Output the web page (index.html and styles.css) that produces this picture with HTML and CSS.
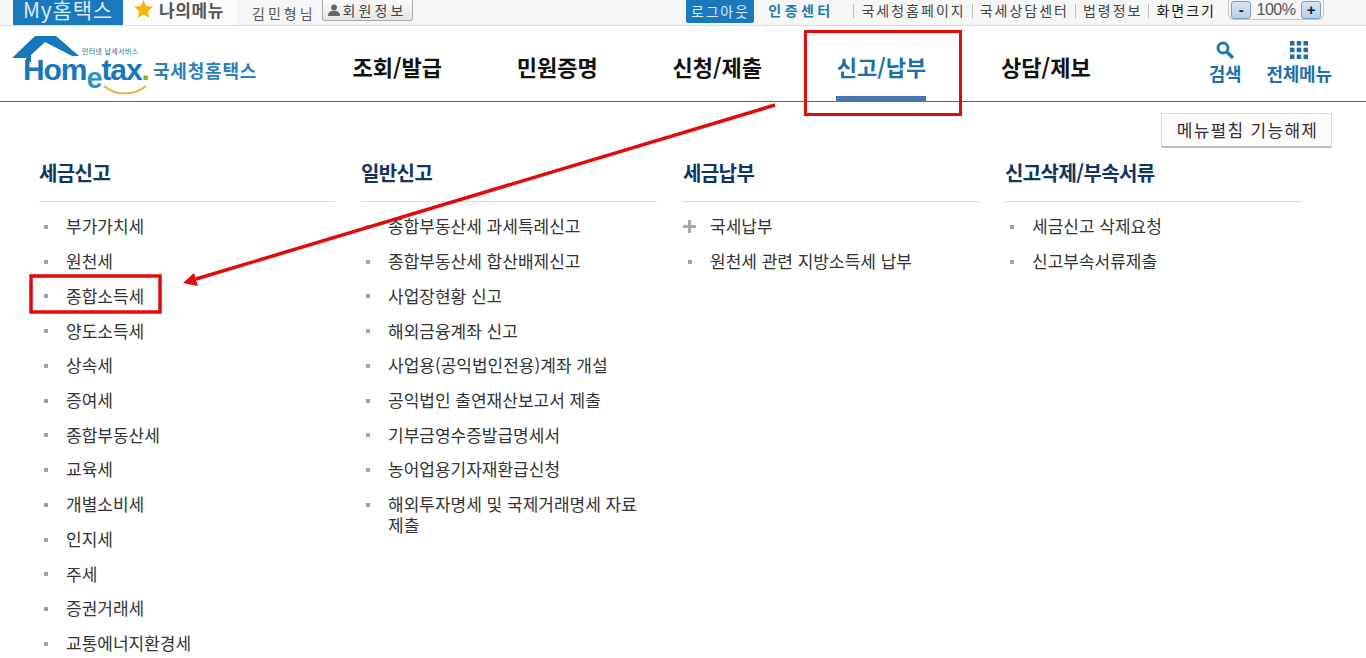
FILE: index.html
```html
<!DOCTYPE html>
<html lang="ko">
  <head>
    <meta charset="UTF-8" />
    <title>국세청 홈택스</title>
    <link rel="stylesheet" href="styles.css">
  </head>
  <body>
    <!-- 상단 유틸 바 -->
    <div class="topbar">
      <div class="topbar-left">
        <a class="my-tab">My홈택스</a>
        <a class="fav-tab">
          <svg class="star" viewBox="0 0 20 20" width="19" height="19"><path d="M10 0l2.900 6.300 6.900.8-5.100 4.700 1.400 6.800L10 15.200 3.900 18.600l1.400-6.800L.2 7.100l6.900-.8z" fill="#f7b512"/></svg>
          나의메뉴
        </a>
        <span class="user-name">김민형님</span>
        <a class="user-btn">
          <svg viewBox="0 0 14 14" width="14" height="14"><circle cx="7" cy="4" r="3.300" fill="#666"/><path d="M0 14c0-4 2.500-6 7-6s7 2 7 6z" fill="#666"/></svg>
          회원정보
        </a>
      </div>
      <div class="topbar-right">
        <a class="logout">로그아웃</a>
        <a class="cert">인증센터</a>
        <a class="util">국세청홈페이지</a>
        <a class="util">국세상담센터</a>
        <a class="util">법령정보</a>
        <a class="util dark">화면크기</a>
        <div class="zoom-box">
          <span class="zoom-btn">-</span>
          <span class="zoom-val">100%</span>
          <span class="zoom-btn">+</span>
        </div>
      </div>
    </div>

    <!-- 헤더 -->
    <div class="header">
      <a class="logo">
        <svg class="logo-house" viewBox="0 0 72 26" width="72" height="26">
          <path d="M0 22L23 0h21l23 20h-7L33 6 19 19v13h-5V22z" fill="#1777bb"/>
        </svg>
        <span class="logo-sub">인터넷 납세서비스</span>
        <span class="logo-word">Hom<span class="logo-e">e</span>tax<span class="logo-dot">.</span></span>
        <svg class="logo-smile" viewBox="0 0 44 10" width="44" height="10"><path d="M1 1c12 10 30 10 42 0" fill="none" stroke="#f0b040" stroke-width="2"/></svg>
        <span class="logo-name">국세청홈택스</span>
      </a>
      <div class="nav">
        <a class="nav-item">조회/발급</a>
        <a class="nav-item">민원증명</a>
        <a class="nav-item">신청/제출</a>
        <a class="nav-item active">신고/납부</a>
        <a class="nav-item">상담/제보</a>
      </div>
      <div class="header-tools">
        <a class="tool search">
          <svg viewBox="0 0 18 18" width="18" height="18"><circle cx="7" cy="7" r="5" fill="none" stroke="#1f79b8" stroke-width="3"/><path d="M11 11l6 6" stroke="#1f79b8" stroke-width="3.400"/></svg>
          검색
        </a>
        <a class="tool all">
          <svg viewBox="0 0 18 18" width="18" height="18" fill="#1f6fa8"><rect width="4.500" height="4.500"/><rect x="6.700" width="4.500" height="4.500"/><rect x="13.500" width="4.500" height="4.500"/><rect y="6.700" width="4.500" height="4.500"/><rect x="6.700" y="6.700" width="4.500" height="4.500"/><rect x="13.500" y="6.700" width="4.500" height="4.500"/><rect y="13.500" width="4.500" height="4.500"/><rect x="6.700" y="13.500" width="4.500" height="4.500"/><rect x="13.500" y="13.500" width="4.500" height="4.500"/></svg>
          전체메뉴
        </a>
      </div>
    </div>

    <!-- 메뉴 펼침 영역 -->
    <div class="menu-area">
      <div class="menu-toolbar">
        <button class="unfold-btn">메뉴펼침 기능해제</button>
      </div>
      <div class="columns">
        <div class="col">
          <h3>세금신고</h3>
          <ul>
            <li>부가가치세</li>
            <li>원천세</li>
            <li>종합소득세</li>
            <li>양도소득세</li>
            <li>상속세</li>
            <li>증여세</li>
            <li>종합부동산세</li>
            <li>교육세</li>
            <li>개별소비세</li>
            <li>인지세</li>
            <li>주세</li>
            <li>증권거래세</li>
            <li>교통에너지환경세</li>
          </ul>
        </div>
        <div class="col">
          <h3>일반신고</h3>
          <ul>
            <li>종합부동산세 과세특례신고</li>
            <li>종합부동산세 합산배제신고</li>
            <li>사업장현황 신고</li>
            <li>해외금융계좌 신고</li>
            <li>사업용(공익법인전용)계좌 개설</li>
            <li>공익법인 출연재산보고서 제출</li>
            <li>기부금영수증발급명세서</li>
            <li>농어업용기자재환급신청</li>
            <li>해외투자명세 및 국제거래명세 자료 제출</li>
          </ul>
        </div>
        <div class="col">
          <h3>세금납부</h3>
          <ul>
            <li class="plus">국세납부</li>
            <li>원천세 관련 지방소득세 납부</li>
          </ul>
        </div>
        <div class="col">
          <h3>신고삭제/부속서류</h3>
          <ul>
            <li>세금신고 삭제요청</li>
            <li>신고부속서류제출</li>
          </ul>
        </div>
      </div>
    </div>

    <!-- 빨간 표시 -->
    <svg class="marks" width="1366" height="658" viewBox="0 0 1366 658">
      <rect x="805.500" y="31.500" width="155" height="83" fill="none" stroke="#e30a0a" stroke-width="3"/>
      <rect x="31" y="276" width="129" height="36" fill="none" stroke="#e30a0a" stroke-width="3.500"/>
      <path d="M775 105L196 279" stroke="#e30a0a" stroke-width="3.500"/>
      <path d="M183 283L194 273L198 286z" fill="#e30a0a"/>
    </svg>
  </body>
</html>
```

FILE: styles.css
```css
html,
body {
  margin: 0;
  padding: 0;
  height: 658px;
  overflow: hidden;
}
body {
  position: relative;
  background: #fff;
  color: #333;
  font-family: "Noto Sans CJK KR", "Liberation Sans", sans-serif;
}
a {
  display: inline-block;
  text-decoration: none;
}

/* top bar */
.topbar {
  display: flex;
  justify-content: space-between;
  height: 25px;
  padding-left: 13px;
  padding-right: 42px;
  background: #f6f6f6;
  border-bottom: 1px solid #dcdcdc;
}
.topbar-left,
.topbar-right {
  display: flex;
  align-items: flex-start;
}
.my-tab {
  width: 110px;
  height: 25px;
  background: #1a78bd;
  color: #d8ecf8;
  font-size: 21px;
  letter-spacing: 0.800px;
  line-height: 19px;
  text-align: center;
}
.fav-tab {
  display: flex;
  align-items: flex-start;
  gap: 6px;
  box-sizing: border-box;
  width: 114px;
  height: 25px;
  padding-left: 11px;
  background: #fcfcfc;
  color: #555;
  font-size: 17px;
  font-weight: 700;
  letter-spacing: 0.600px;
  line-height: 20px;
}
.star {
  flex: none;
}
.user-name {
  margin-left: 15px;
  margin-top: 3px;
  color: #555;
  font-size: 14px;
  letter-spacing: 3px;
  line-height: 20px;
}
.user-btn {
  display: flex;
  align-items: center;
  gap: 3px;
  box-sizing: border-box;
  width: 91px;
  height: 21px;
  margin-left: 6px;
  padding: 0 5px;
  background: linear-gradient(#fafafa, #e6e6e6);
  border: 1px solid #aaa;
  border-top: 0;
  border-radius: 0 0 3px 3px;
  color: #444;
  font-size: 14px;
  letter-spacing: 3.100px;
  white-space: nowrap;
}
.logout {
  width: 68px;
  height: 23px;
  background: #1a78bd;
  border-radius: 0 0 2px 2px;
  color: #d8ecf8;
  font-size: 14px;
  letter-spacing: 1.800px;
  line-height: 22px;
  text-align: center;
}
.cert {
  margin-left: 14px;
  margin-right: 20px;
  color: #1f79b0;
  font-size: 14px;
  font-weight: 700;
  letter-spacing: 3.400px;
  line-height: 21px;
}
.util {
  height: 14px;
  margin-top: 4px;
  padding: 0 6px 0 7px;
  border-left: 1px solid #bbb;
  color: #444;
  font-size: 14px;
  letter-spacing: 2px;
  line-height: 13px;
}
.util.dark {
  color: #111;
}
.zoom-box {
  display: flex;
  align-items: center;
  justify-content: space-between;
  box-sizing: border-box;
  width: 96px;
  height: 20px;
  margin-left: 6px;
  padding: 0 2px;
  border: 1px solid #bcc8d6;
  border-top: 0;
  border-radius: 0 0 6px 6px;
  color: #555;
  font-family: "Liberation Sans", sans-serif;
  font-size: 16px;
  letter-spacing: -0.500px;
}
.zoom-btn {
  box-sizing: border-box;
  width: 20px;
  height: 18px;
  background: linear-gradient(#d9e6f2, #b9cfe4);
  border: 1px solid #7f9bb8;
  border-radius: 3px;
  color: #123;
  font-size: 15px;
  font-weight: 700;
  line-height: 15px;
  text-align: center;
}

/* header */
.header {
  position: relative;
  display: flex;
  height: 75px;
  border-bottom: 1px solid #3f6a8a;
}
.logo {
  position: relative;
  flex: none;
  width: 352.500px;
}
.logo-house {
  position: absolute;
  left: 12px;
  top: 10px;
}
.logo-sub {
  position: absolute;
  left: 82px;
  top: 20px;
  color: #27609a;
  font-size: 7px;
  letter-spacing: 0.300px;
  line-height: 10px;
  white-space: nowrap;
}
.logo-word {
  position: absolute;
  left: 23px;
  top: 32px;
  color: #1777bb;
  font-family: "Liberation Sans", sans-serif;
  font-size: 30px;
  font-weight: 700;
  letter-spacing: -1.100px;
  line-height: 24px;
}
.logo-e {
  position: relative;
  top: 8px;
  color: #2f95cc;
  font-size: 29px;
}
.logo-dot {
  color: #7ab51d;
}
.logo-smile {
  position: absolute;
  left: 103px;
  top: 59px;
}
.logo-name {
  position: absolute;
  left: 153px;
  top: 31px;
  color: #2a80b9;
  font-size: 18px;
  font-weight: 700;
  letter-spacing: 0.800px;
  line-height: 26px;
  white-space: nowrap;
}
.nav {
  display: flex;
  gap: 74.750px;
}
.nav-item {
  position: relative;
  padding-top: 24px;
  color: #111;
  font-size: 22px;
  font-weight: 700;
  line-height: 32px;
}
.nav-item.active {
  color: #1c6fa8;
}
.nav-item.active::after {
  content: "";
  position: absolute;
  left: -0.500px;
  right: 0.500px;
  bottom: -1px;
  height: 6px;
  background: #4a76b0;
}
.header-tools {
  display: flex;
  gap: 25px;
  margin-left: 118px;
  padding-top: 15px;
}
.tool {
  display: flex;
  flex-direction: column;
  align-items: center;
  color: #1f6fa8;
  font-size: 18px;
  font-weight: 700;
  letter-spacing: -0.200px;
  line-height: 29px;
}

/* menu */
.menu-area {
  padding: 11px 34px 0 39px;
}
.menu-toolbar {
  display: flex;
  justify-content: flex-end;
  height: 35px;
}
.unfold-btn {
  width: 171px;
  height: 35px;
  padding: 0 0 1px 2px;
  background: #fcfcfc;
  border: 1px solid #dcdcdc;
  border-bottom: 2px solid #bdbdbd;
  color: #3a2a3a;
  font-family: inherit;
  font-size: 17px;
  letter-spacing: 1.300px;
}
.columns {
  display: flex;
  gap: 26px;
  margin-top: 1px;
}
.col {
  width: 296px;
}
.col h3 {
  box-sizing: border-box;
  height: 53px;
  margin: 0;
  padding-top: 9px;
  border-bottom: 1px solid #dcdcdc;
  color: #0f3560;
  font-size: 20px;
  font-weight: 700;
  letter-spacing: -0.600px;
  line-height: 29px;
}
.col ul {
  margin: 7px 0 0;
  padding: 0;
  list-style: none;
}
.col li {
  position: relative;
  padding: 6.300px 10px 7.450px 27px;
  color: #333;
  font-size: 17px;
  line-height: 21px;
}
.col li::before {
  content: "";
  position: absolute;
  left: 5px;
  top: 16px;
  width: 4px;
  height: 4px;
  background: #a0a0a0;
}
.col li.plus::before {
  left: 0;
  top: 11px;
  width: 13px;
  height: 13px;
  background:
    linear-gradient(#a8a8a8, #a8a8a8) center / 13px 3px no-repeat,
    linear-gradient(#a8a8a8, #a8a8a8) center / 3px 13px no-repeat;
}

/* annotation */
.marks {
  position: absolute;
  left: 0;
  top: 0;
  pointer-events: none;
}
```
